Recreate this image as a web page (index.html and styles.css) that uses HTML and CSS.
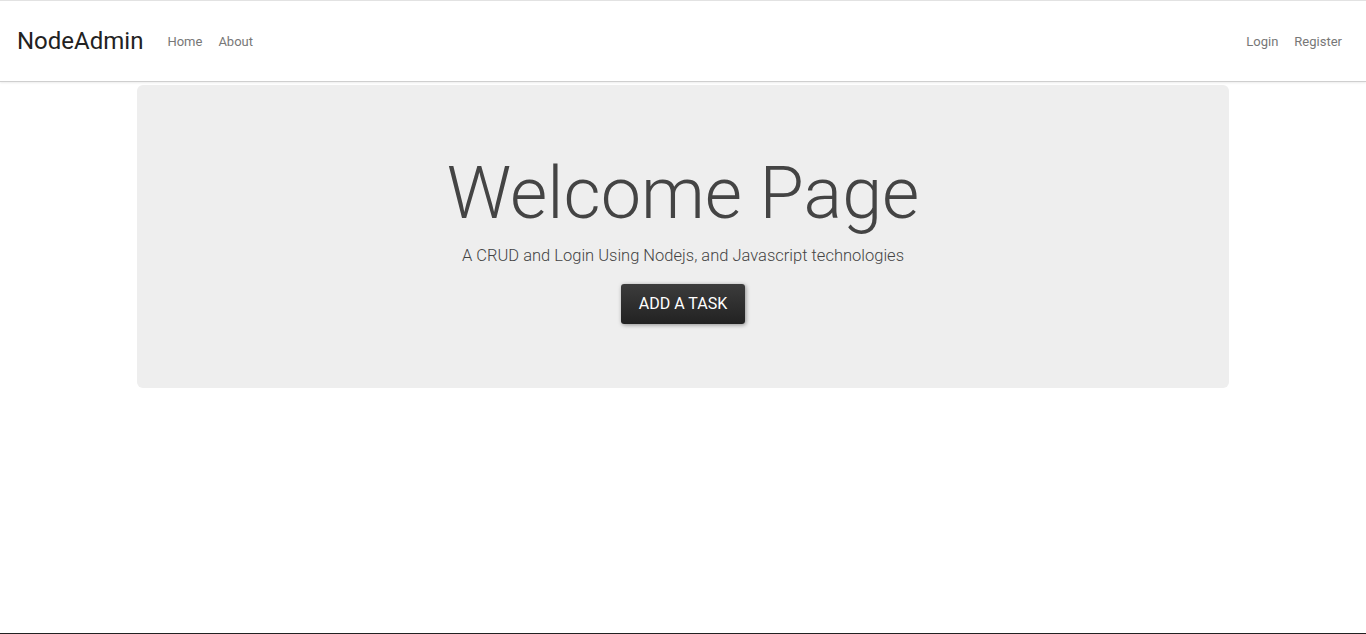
FILE: index.html
```html
<!DOCTYPE html>
<html lang="en">
<head>
<meta charset="utf-8">
<title>NodeAdmin</title>
<link rel="stylesheet" href="styles.css">
</head>
<body>
<div class="page">
  <nav class="navbar">
    <a class="brand" href="#">NodeAdmin</a>
    <ul class="nav">
      <li><a href="#">Home</a></li>
      <li><a href="#">About</a></li>
    </ul>
    <ul class="nav nav-right">
      <li><a href="#">Login</a></li>
      <li><a href="#">Register</a></li>
    </ul>
  </nav>
  <main class="container">
    <section class="jumbotron">
      <h1>Welcome Page</h1>
      <p>A CRUD and Login Using Nodejs, and Javascript technologies</p>
      <a class="btn" href="#">ADD A TASK</a>
    </section>
  </main>
</div>
<footer class="footer"></footer>
</body>
</html>
```
FILE: styles.css
```css
* { box-sizing: border-box; }
html, body { margin: 0; padding: 0; }
body {
  font-family: Roboto, "Liberation Sans", sans-serif;
  background: #fff;
  color: #666;
}
.page { min-height: 633px; }
.navbar {
  display: flex;
  align-items: center;
  height: 82px;
  border-top: 1px solid #e2e2e2;
  border-bottom: 1px solid #cfcfcf;
  box-shadow: 0 1px 2px rgba(0,0,0,0.08);
  padding: 0 24px 2px 17px;
}
.brand {
  font-size: 24px;
  color: #222;
  text-decoration: none;
  margin-right: 16px;
  margin-top: 2px;
}
.nav {
  list-style: none;
  display: flex;
  gap: 16px;
  margin: 0;
  padding: 0 0 0 8px;
}
.nav a {
  font-size: 13px;
  color: #777;
  text-decoration: none;
}
.nav-right { margin-left: auto; }
.container {
  width: 1092px;
  margin: 3px 0 0 137px;
}
.jumbotron {
  background: #eee;
  border-radius: 6px;
  height: 303px;
  text-align: center;
  padding-top: 73px;
}
.jumbotron h1 {
  margin: 0;
  font-size: 72px;
  font-weight: 300;
  color: #444;
  line-height: 1;
}
.jumbotron p {
  margin: 16px 0 18px;
  font-size: 16.5px;
  font-weight: 300;
  color: #444;
  line-height: 1.2;
}
.btn {
  display: inline-block;
  width: 124px;
  height: 40px;
  line-height: 40px;
  border-radius: 3px;
  background: linear-gradient(#3c3c3c, #222);
  color: #fff;
  font-size: 16px;
  text-decoration: none;
  box-shadow: 1px 1px 4px rgba(0,0,0,0.4);
}
.footer {
  height: 40px;
  background: #222;
}
```
